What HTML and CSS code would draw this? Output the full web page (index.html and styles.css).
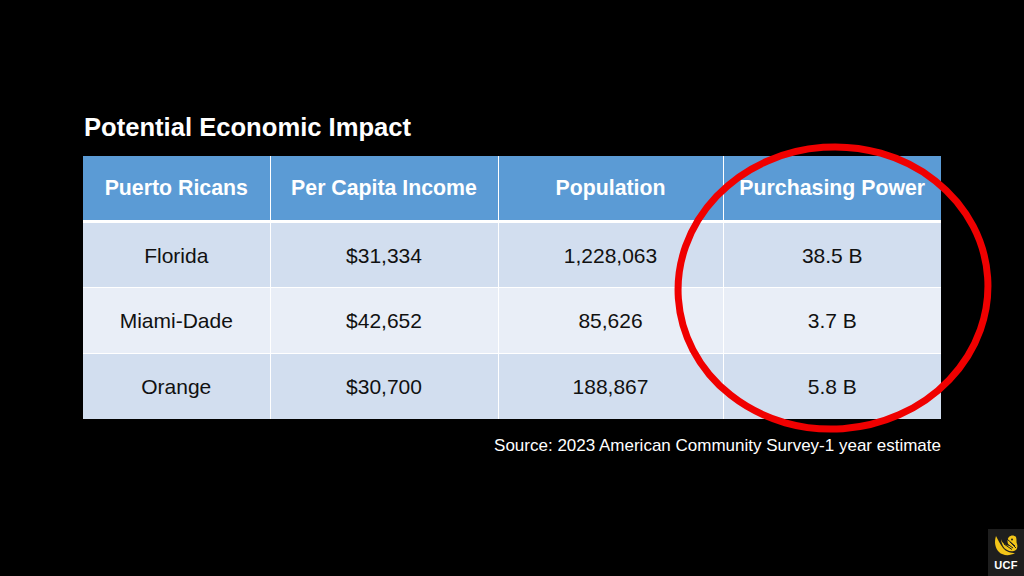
FILE: index.html
```html
<!DOCTYPE html>
<html>
<head>
<meta charset="utf-8">
<link rel="stylesheet" href="styles.css">
</head>
<body>
<div class="slide">
  <div class="content">
    <h1 class="title">Potential Economic Impact</h1>
    <table class="data">
      <colgroup>
        <col class="c1"><col class="c2"><col class="c3"><col class="c4">
      </colgroup>
      <thead>
        <tr><th>Puerto Ricans</th><th>Per Capita Income</th><th>Population</th><th>Purchasing Power</th></tr>
      </thead>
      <tbody>
        <tr class="odd"><td>Florida</td><td>$31,334</td><td>1,228,063</td><td>38.5 B</td></tr>
        <tr class="even"><td>Miami-Dade</td><td>$42,652</td><td>85,626</td><td>3.7 B</td></tr>
        <tr class="odd"><td>Orange</td><td>$30,700</td><td>188,867</td><td>5.8 B</td></tr>
      </tbody>
    </table>
    <p class="source">Source: 2023 American Community Survey-1 year estimate</p>
  </div>
  <svg class="circle" width="1024" height="576" viewBox="0 0 1024 576">
    <ellipse cx="833" cy="288" rx="155" ry="141" fill="none" stroke="#f00000" stroke-width="7" transform="rotate(-4 833 288)"/>
  </svg>
  <div class="logo">
    <svg class="peg" width="28" height="26" viewBox="0 0 28 26">
      <path d="M4 4 C2 10 3 16 7 20 C11 24 18 24 23 21 C19 21 14 20 11 16 C8 12 6 8 4 4 Z" fill="#f2c519"/>
      <path d="M9 7 C10 11 13 13 17 14 C15 11 15 7 17 5 C19 3 22 3 24 5 C25 8 24 10 25 12 C26 15 25 18 22 19 C18 20 13 18 11 14 C10 12 9 9 9 7 Z" fill="#f2c519"/>
      <path d="M11 9 L21 16 M12 12 L20 17.5 M15 7 L23 14 M18 10 L24 16" stroke="#1e1e1e" stroke-width="1"/>
      <circle cx="20" cy="7.5" r="1" fill="#1e1e1e"/>
    </svg>
    <span class="ucf">UCF</span>
  </div>
</div>
</body>
</html>
```

FILE: styles.css
```css
* { box-sizing: border-box; }
html, body { margin: 0; padding: 0; background: #000; }
.slide {
  width: 1024px;
  height: 576px;
  background: #000;
  position: relative;
  overflow: hidden;
  font-family: "Liberation Sans", Arial, sans-serif;
}
.content {
  display: flex;
  flex-direction: column;
  align-items: flex-start;
  padding: 113px 0 0 83px;
  width: 941px;
}
.title {
  margin: 0 0 14px 1px;
  font-size: 25.6px;
  line-height: 29px;
  font-weight: bold;
  color: #fff;
}
.data {
  width: 858px;
  border-collapse: collapse;
  table-layout: fixed;
  font-size: 21px;
}
.c1 { width: 187px; }
.c2 { width: 228px; }
.c3 { width: 225px; }
.c4 { width: 218px; }
.data th {
  background: #5b9bd5;
  color: #fff;
  font-weight: bold;
  font-size: 21.3px;
  height: 65px;
  padding: 2px 0 0 0;
  text-align: center;
  border-left: 1px solid #fff;
  border-bottom: 3px solid #fff;
}
.data td {
  height: 66px;
  padding: 2px 0 0 0;
  text-align: center;
  color: #111;
  border-left: 1px solid #fff;
  border-top: 1px solid #fff;
}
.data th:first-child, .data td:first-child { border-left: none; }
.odd td { background: #d2deef; }
.even td { background: #e9eef7; }
.source {
  align-self: flex-end;
  margin: 17px 0 0 0;
  font-size: 17px;
  line-height: 20px;
  color: #fff;
}
.circle {
  position: absolute;
  left: 0;
  top: 0;
  pointer-events: none;
}
.logo {
  position: absolute;
  right: 0;
  bottom: 0;
  width: 36px;
  height: 47px;
  background: #1e1e1e;
  display: flex;
  flex-direction: column;
  align-items: center;
  padding-top: 3px;
}
.peg { display: block; }
.ucf {
  color: #fff;
  font-weight: bold;
  font-size: 11px;
  line-height: 12px;
  margin-top: 1px;
  letter-spacing: 0.3px;
}
```
